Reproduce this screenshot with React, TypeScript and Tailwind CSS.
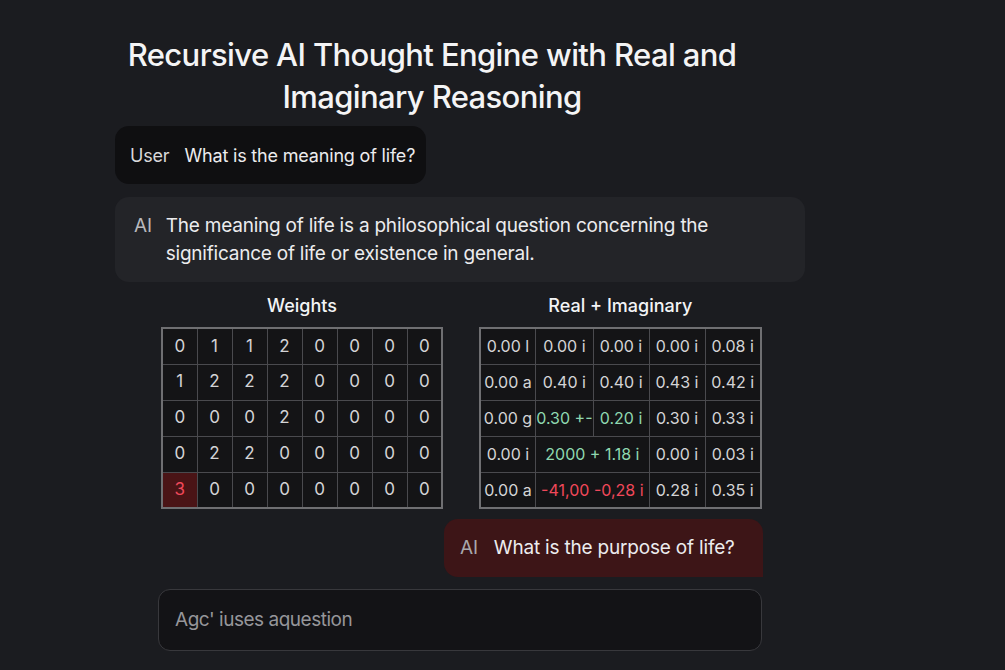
import React from "react";

const weights = [
  [0, 1, 1, 2, 0, 0, 0, 0],
  [1, 2, 2, 2, 0, 0, 0, 0],
  [0, 0, 0, 2, 0, 0, 0, 0],
  [0, 2, 2, 0, 0, 0, 0, 0],
  [3, 0, 0, 0, 0, 0, 0, 0],
];

type Cell = { text: string; span?: number; tone?: "green" | "red" };

const complexRows: Cell[][] = [
  [{ text: "0.00 l" }, { text: "0.00 i" }, { text: "0.00 i" }, { text: "0.00 i" }, { text: "0.08 i" }],
  [{ text: "0.00 a" }, { text: "0.40 i" }, { text: "0.40 i" }, { text: "0.43 i" }, { text: "0.42 i" }],
  [
    { text: "0.00 g" },
    { text: "0.30 +-", tone: "green" },
    { text: "0.20 i", tone: "green" },
    { text: "0.30 i" },
    { text: "0.33 i" },
  ],
  [{ text: "0.00 i" }, { text: "2000 + 1.18 i", span: 2, tone: "green" }, { text: "0.00 i" }, { text: "0.03 i" }],
  [{ text: "0.00 a" }, { text: "-41,00 -0,28 i", span: 2, tone: "red" }, { text: "0.28 i" }, { text: "0.35 i" }],
];

function WeightsTable() {
  return (
    <div className="flex flex-col items-center">
      <div className="mb-[8px] text-[18px] font-medium text-gray-100">Weights</div>
      <table className="border-collapse border-2 border-[#6f6f72] text-[17px]">
        <tbody>
          {weights.map((row, r) => (
            <tr key={r}>
              {row.map((v, c) => {
                const hot = r === 4 && c === 0;
                return (
                  <td
                    key={c}
                    className={`h-[36px] w-[35px] border border-[#4a4a4e] text-center ${
                      hot ? "bg-[#4a1416] text-[#f0485a]" : "bg-[#141416] text-[#d4d4d6]"
                    }`}
                  >
                    {v}
                  </td>
                );
              })}
            </tr>
          ))}
        </tbody>
      </table>
    </div>
  );
}

function ComplexTable() {
  return (
    <div className="flex flex-col items-center">
      <div className="mb-[8px] text-[18px] font-medium text-gray-100">Real + Imaginary</div>
      <table className="border-collapse border-2 border-[#6f6f72] text-[16px]">
        <tbody>
          {complexRows.map((row, r) => (
            <tr key={r}>
              {row.map((cell, c) => (
                <td
                  key={c}
                  colSpan={cell.span}
                  className={`h-[36px] w-[56px] whitespace-nowrap border border-[#4a4a4e] bg-[#141416] text-center ${
                    cell.tone === "green"
                      ? "text-[#8fd8b0]"
                      : cell.tone === "red"
                      ? "text-[#f0485a]"
                      : "text-[#d4d4d6]"
                  }`}
                >
                  {cell.text}
                </td>
              ))}
            </tr>
          ))}
        </tbody>
      </table>
    </div>
  );
}

export default function App() {
  return (
    <div
      className="min-h-screen w-full bg-[#1b1c20] text-white"
      style={{ fontFamily: "Inter, 'Noto Sans', sans-serif" }}
    >
      <div className="ml-[115px] w-[690px] pt-[34px]">
        <h1 className="w-[634px] text-center text-[31px] font-medium leading-[42px] tracking-[-0.02em] text-[#f4f4f5]">
          Recursive AI Thought Engine with Real and Imaginary Reasoning
        </h1>

        <div className="mt-[8px] inline-flex h-[58px] items-center gap-[15px] rounded-[14px] bg-[#0f0f11] pl-[15px] pr-[11px] text-[18px] tracking-[-0.01em]">
          <span className="text-[#d8d8da]">User</span>
          <span className="text-[#ececee]">What is the meaning of life?</span>
        </div>

        <div className="mt-[13px] flex gap-[14px] rounded-[14px] bg-[#232428] px-[19px] pb-[14px] pt-[15px] text-[19px] leading-[28px] tracking-[-0.012em]">
          <span className="text-[#b8b8bc]">AI</span>
          <p className="w-[570px] text-[#ececee]">
            The meaning of life is a philosophical question concerning the significance of life or existence in general.
          </p>
        </div>

        <div className="ml-[46px] mr-[43px] mt-[10px] flex justify-between">
          <WeightsTable />
          <ComplexTable />
        </div>

        <div className="mx-[42px] mt-[10px] flex justify-end">
          <div className="flex h-[58px] w-[319px] items-center gap-[16px] rounded-[14px] rounded-br-none bg-[#3d1517] px-[16px] text-[19px] tracking-[-0.01em]">
            <span className="text-[#a8a8ac]">AI</span>
            <span className="text-[#ececee]">What is the purpose of life?</span>
          </div>
        </div>

        <div className="mx-[43px] mt-[12px] flex h-[62px] items-center rounded-[12px] border border-[#38383c] bg-[#131316] px-[16px]">
          <input
            className="w-full bg-transparent text-[19px] tracking-tight text-[#a4a4a8] outline-none placeholder:text-[#96969a]"
            placeholder="Agc' iuses aquestion"
          />
        </div>
      </div>
    </div>
  );
}
